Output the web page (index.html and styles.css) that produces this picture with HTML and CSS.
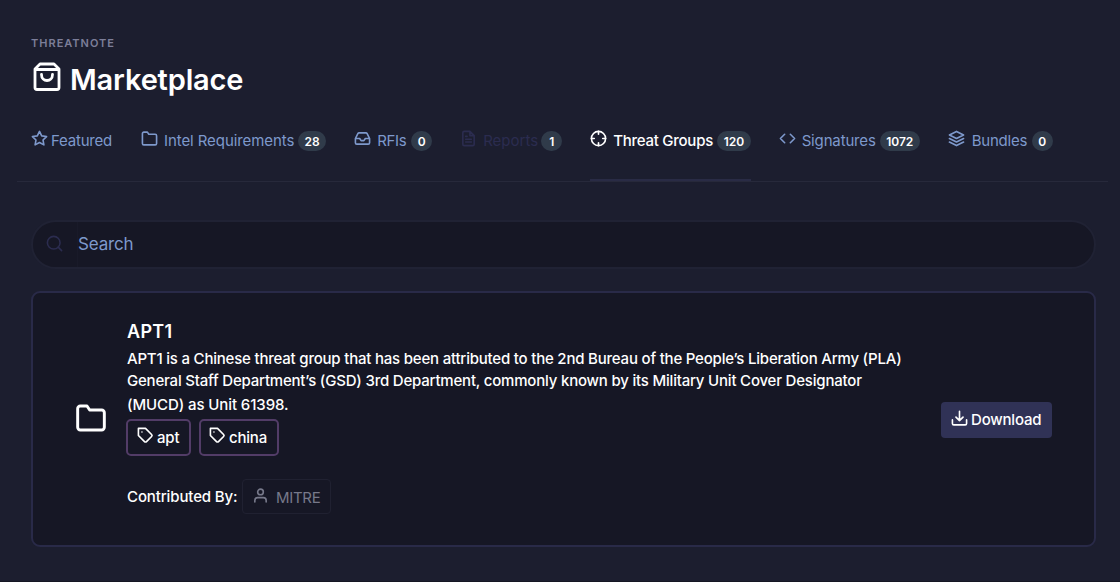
FILE: index.html
```html
<!DOCTYPE html>
<html lang="en">
<head>
<meta charset="utf-8">
<title>Marketplace</title>
<link rel="stylesheet" href="styles.css">
</head>
<body>
<header class="header">
  <div class="pretitle">THREATNOTE</div>
  <h1 class="title">
    <svg class="icon title-icon" viewBox="0 0 28 30"><path d="M7 2h14l5 5v18.500a2 2 0 0 1-2 2H4a2 2 0 0 1-2-2V7zM2 7.500h24M8.500 12.500c0 8 11 8 11 0"/></svg>
    <span class="title-text">Marketplace</span>
  </h1>
  <nav class="tabs">
    <a class="tab featured"><svg class="icon" viewBox="0 0 24 24"><path d="m12 2 3.090 6.260L22 9.270l-5 4.870 1.180 6.880L12 17.770l-6.180 3.250L7 14.140 2 9.270l6.910-1.010z"/></svg><span class="label">Featured</span></a>
    <a class="tab intel"><svg class="icon" viewBox="0 0 24 24"><path d="M22 19a2 2 0 0 1-2 2H4a2 2 0 0 1-2-2V5a2 2 0 0 1 2-2h5l2 3h9a2 2 0 0 1 2 2z"/></svg><span class="label">Intel Requirements</span><span class="badge">28</span></a>
    <a class="tab rfis"><svg class="icon" viewBox="0 0 24 24"><path d="M22 12h-6l-2 3h-4l-2-3H2M5.450 5.110 2 12v6a2 2 0 0 0 2 2h16a2 2 0 0 0 2-2v-6l-3.450-6.890A2 2 0 0 0 16.760 4H7.240a2 2 0 0 0-1.790 1.110z"/></svg><span class="label">RFIs</span><span class="badge">0</span></a>
    <a class="tab reports disabled"><svg class="icon" viewBox="0 0 24 24"><path d="M14 2H6a2 2 0 0 0-2 2v16a2 2 0 0 0 2 2h12a2 2 0 0 0 2-2V8zM14 2v6h6M16 13H8M16 17H8M10 9H8"/></svg><span class="label">Reports</span><span class="badge">1</span></a>
    <a class="tab groups active"><svg class="icon" viewBox="0 0 24 24"><circle cx="12" cy="12" r="10"/><path d="M22 12h-4M6 12H2M12 6V2M12 22v-4"/></svg><span class="label">Threat Groups</span><span class="badge">120</span></a>
    <a class="tab signatures"><svg class="icon" viewBox="0 0 24 24"><path d="m16 18 6-6-6-6M8 6l-6 6 6 6"/></svg><span class="label">Signatures</span><span class="badge">1072</span></a>
    <a class="tab bundles"><svg class="icon" viewBox="0 0 24 24"><path d="M12 2 2 7l10 5 10-5zM2 17l10 5 10-5M2 12l10 5 10-5"/></svg><span class="label">Bundles</span><span class="badge">0</span></a>
  </nav>
</header>
<main class="main">
  <div class="search">
    <div class="search-prefix"><svg class="icon" viewBox="0 0 24 24"><circle cx="11" cy="11" r="8"/><path d="m21 21-4.350-4.350"/></svg></div>
    <div class="search-field">Search</div>
  </div>
  <article class="card">
    <svg class="icon folder" viewBox="0 0 24 24"><path d="M22 19a2 2 0 0 1-2 2H4a2 2 0 0 1-2-2V5a2 2 0 0 1 2-2h5l2 3h9a2 2 0 0 1 2 2z"/></svg>
    <div class="body">
      <h2 class="name">APT1</h2>
      <p class="description"><span class="line l1">APT1 is a Chinese threat group that has been attributed to the 2nd Bureau of the People’s Liberation Army (PLA)</span> <span class="line l2">General Staff Department’s (GSD) 3rd Department, commonly known by its Military Unit Cover Designator</span> <span class="line l3">(MUCD) as Unit 61398.</span></p>
      <div class="tags">
        <span class="tag apt"><svg class="icon" viewBox="0 0 24 24"><path d="m20.590 13.410-7.170 7.170a2 2 0 0 1-2.830 0L2 12V2h10l8.590 8.590a2 2 0 0 1 0 2.820zM7 7h.01"/></svg><span>apt</span></span>
        <span class="tag china"><svg class="icon" viewBox="0 0 24 24"><path d="m20.590 13.410-7.170 7.170a2 2 0 0 1-2.830 0L2 12V2h10l8.590 8.590a2 2 0 0 1 0 2.820zM7 7h.01"/></svg><span>china</span></span>
      </div>
      <div class="credit"><span class="credit-label">Contributed By:</span><span class="author"><svg class="icon" viewBox="0 0 24 24"><path d="M20 21v-2a4 4 0 0 0-4-4H8a4 4 0 0 0-4 4v2"/><circle cx="12" cy="7" r="4"/></svg><span>MITRE</span></span></div>
    </div>
    <button class="download"><svg class="icon" viewBox="0 0 24 24"><path d="M22 14v5a2 2 0 0 1-2 2H4a2 2 0 0 1-2-2v-5M7 10l5 5 5-5M12 15V2"/></svg><span>Download</span></button>
  </article>
</main>
</body>
</html>
```
FILE: styles.css
```css
* { box-sizing: border-box; }
body {
  margin: 0;
  height: 582px;
  overflow: hidden;
  background: #1c1e2f;
  color: #fff;
  font: 500 15px/20px Inter, "Liberation Sans", sans-serif;
  letter-spacing: -0.15px;
  border-bottom: 1px solid #151623;
}
.icon {
  width: 17px;
  height: 17px;
  flex: none;
  fill: none;
  stroke: currentColor;
  stroke-width: 2.3;
  stroke-linecap: round;
  stroke-linejoin: round;
}
.header {
  margin: 0 12px 0 17px;
  padding: 36px 0 0 14px;
  height: 182px;
  border-bottom: 1px solid #27293b;
}
.pretitle { font-size: 11px; line-height: 15px; font-weight: 600; letter-spacing: 1px; color: #7c7e99; }
.title { display: flex; margin: 10px 0 0 1px; height: 38px; font-size: 29px; line-height: 38px; font-weight: 600; }
.title-icon { width: 28px; height: 30px; margin: 1px 10px 0 1px; stroke-width: 2.800; }
.title-text { letter-spacing: -0.15px; margin-left: -1px; white-space: nowrap; }
.tabs { display: flex; height: 82px; padding-top: 31px; color: #7e99cc; font-weight: 400; }
.tab { display: flex; height: 51px; margin-right: 28px; white-space: nowrap; }
.tab .icon { margin: 0 6px 0 0; }
.label { line-height: 22px; }
.featured .icon { margin-right: 3px; }
.featured .label { width: 62px; letter-spacing: -0.2px; }
.intel .label { width: 134px; letter-spacing: -0.08px; }
.rfis .label { width: 34px; letter-spacing: -0.3px; }
.reports .label { width: 58px; letter-spacing: 0; }
.groups .label { width: 104px; letter-spacing: -0.25px; }
.signatures .icon { margin-right: 6px; }
.signatures .label { width: 78px; }
.bundles .icon { margin-right: 7px; }
.bundles .label { width: 60px; letter-spacing: -0.25px; }
.disabled { color: #2b2c4f; }
.active { color: #fff; font-weight: 500; border-bottom: 2px solid #292b45; }
.badge {
  min-width: 21px;
  height: 20px;
  margin-top: 1px;
  padding: 0 6.500px;
  border-radius: 10px;
  background: #303b4a;
  color: #fff;
  font-size: 12px;
  line-height: 21px;
  font-weight: 600;
  letter-spacing: 0;
  text-align: center;
}
.main { padding: 38px 24px 0 31px; }
.search {
  display: flex;
  height: 49px;
  border: 2px solid #202234;
  border-radius: 25px;
  background: #161725;
  overflow: hidden;
}
.search-prefix { width: 45px; padding: 12px 0 0 12px; border-right: 1px solid #191a29; color: #2b2c4f; }
.search-prefix .icon { width: 19px; height: 19px; stroke-width: 2; }
.search-field { font-size: 17px; line-height: 45px; font-weight: 400; color: #7e99cc; }
.card {
  display: flex;
  height: 256px;
  margin-top: 22px;
  border: 2px solid #292a48;
  border-radius: 9px;
  background: #161725;
}
.folder { width: 32px; height: 32px; margin: 109px 1px 0 42px; stroke-width: 2.2; }
.body { width: 787px; margin-left: 19px; padding-top: 28px; }
.name { margin: 0; font-size: 18px; line-height: 22px; font-weight: 600; letter-spacing: 0.3px; }
.description { margin: 4px 0 0; }
.line { display: block; height: 23px; line-height: 23px; white-space: nowrap; letter-spacing: -0.205px; }
.l2 { height: 22px; line-height: 22px; letter-spacing: -0.2px; }
.l3 { height: 24px; line-height: 26px; letter-spacing: -0.1px; }
.tags { display: flex; gap: 8px; margin: 3px 0 0 -1px; }
.tag { display: flex; height: 37px; border: 2px solid #523c67; border-radius: 5px; padding: 4px 0 0 9px; line-height: 25px; }
.tag .icon { margin: 2px 3px 0 0; }
.apt { width: 65px; }
.china { width: 80px; }
.china .icon { margin: 2px 3px 0 -1px; }
.china span { letter-spacing: -0.2px; }
.credit { display: flex; margin-top: 23px; line-height: 35px; }
.credit-label { width: 115px; white-space: nowrap; letter-spacing: -0.12px; }
.author { display: flex; width: 89px; height: 35px; border: 1px solid #202131; border-radius: 4px; padding-left: 9px; color: #77798a; font-weight: 400; line-height: 35px; letter-spacing: -0.3px; }
.author .icon { margin: 7px 7px 0 0; }
.download {
  display: flex;
  width: 111px;
  height: 36px;
  margin: 109px 0 0 27px;
  padding: 0 0 0 10px;
  border: 0;
  border-radius: 4px;
  background: #303256;
  color: #fff;
  font: inherit;
  line-height: 36px;
  letter-spacing: -0.2px;
}
.download .icon { margin: 8px 3px 0 0; }
```
